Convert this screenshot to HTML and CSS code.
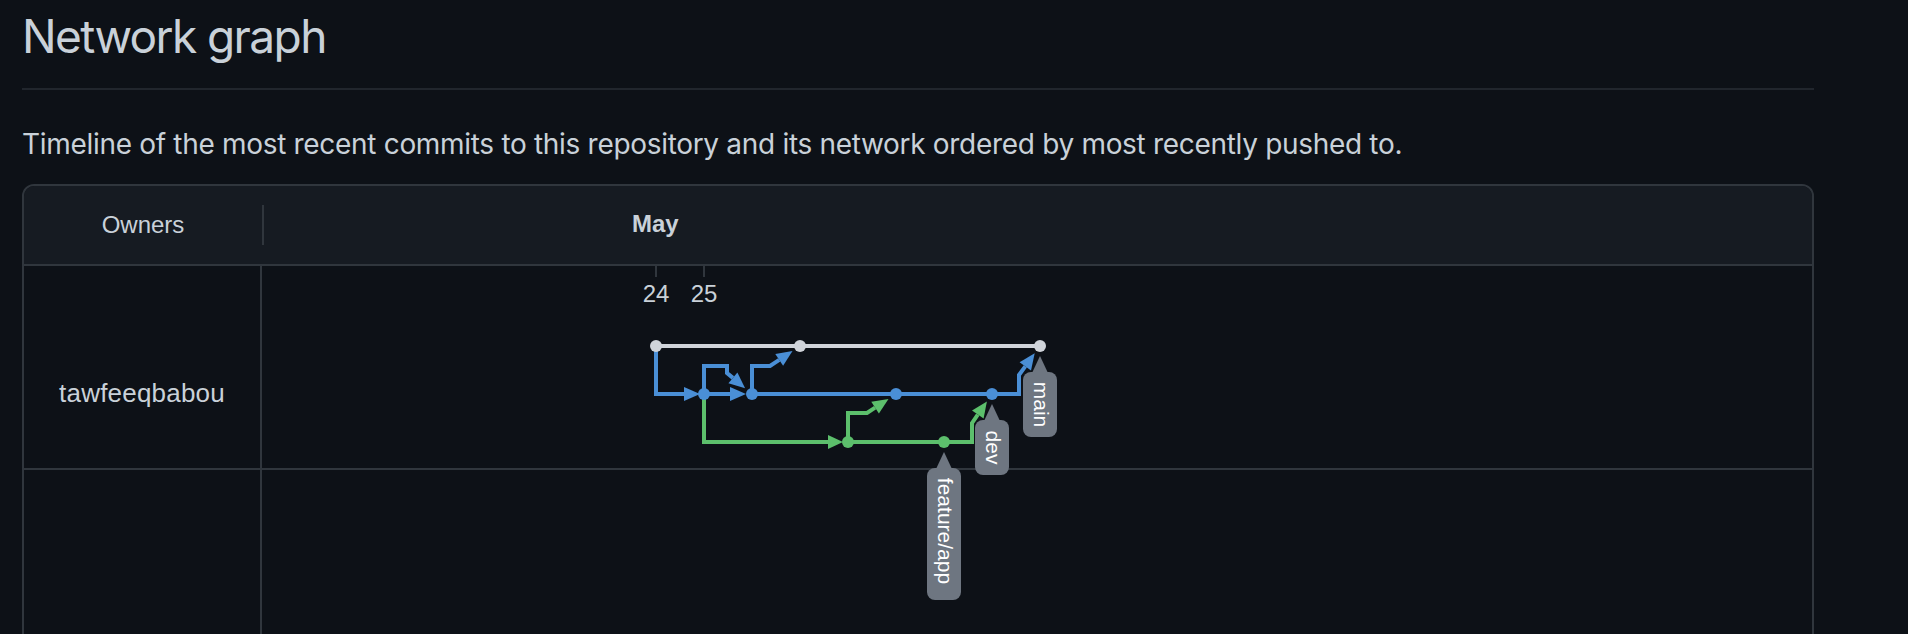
FILE: index.html
```html
<!DOCTYPE html>
<html lang="en">
<head>
<meta charset="utf-8">
<title>Network graph</title>
<link rel="stylesheet" href="styles.css">
</head>
<body>
<div class="page">
  <h2 class="subhead">Network graph</h2>
  <p class="lead">Timeline of the most recent commits to this repository and its network ordered by most recently pushed to.</p>
  <div class="network">
    <div class="net-head">
      <div class="owners-h">Owners</div>
      <div class="vsep"></div>
      <div class="months"><span class="month">May</span></div>
    </div>
    <div class="net-row first">
      <div class="owner">tawfeeqbabou</div>
      <div class="lane"></div>
    </div>
    <div class="net-row">
      <div class="owner"></div>
      <div class="lane"></div>
    </div>
    <svg class="graph" width="1788" height="600" viewBox="24 186 1788 600" xmlns="http://www.w3.org/2000/svg">
      <g class="ticks">
        <line x1="656" y1="266" x2="656" y2="277"/>
        <line x1="704" y1="266" x2="704" y2="277"/>
      </g>
      <text class="date" x="656" y="302">24</text>
      <text class="date" x="704" y="302">25</text>

      <g class="edges">
        <path class="w" d="M656 346 H1040"/>
        <path class="b" d="M656 346 V394 H685"/>
        <polygon class="bf" points="684,387 700,394 684,401"/>
        <path class="b" d="M704 394 H731"/>
        <polygon class="bf" points="730,387 746,394 730,401"/>
        <path class="b" d="M704 394 V366 H727 V373 L732.9 377.9"/>
        <polygon class="bf" points="728.4,383.3 745.1,388.2 737.4,372.5"/>
        <path class="b" d="M752 394 V366 H770 L779.2 359.9"/>
        <polygon class="bf" points="783.1,365.7 792.5,351 775.3,354.1"/>
        <path class="b" d="M752 394 H1019 V375 L1025.3 366.3"/>
        <polygon class="bf" points="1031,370.4 1034.7,353.3 1019.6,362.2"/>

        <path class="g" d="M704 394 V442 H829"/>
        <polygon class="gf" points="828,435 843,442 828,449"/>
        <path class="g" d="M848 442 V413 H867 L875.1 407.7"/>
        <polygon class="gf" points="878.9,413.6 888.5,398.9 871.3,401.8"/>
        <path class="g" d="M848 442 H972 V423 L977.8 414.6"/>
        <polygon class="gf" points="983.6,418.6 986.9,401.4 972,410.6"/>
      </g>

      <g class="dots">
        <circle class="wf" cx="656" cy="346" r="6"/>
        <circle class="wf" cx="800" cy="346" r="6"/>
        <circle class="wf" cx="1040" cy="346" r="6"/>
        <circle class="bf" cx="704" cy="394" r="6"/>
        <circle class="bf" cx="752" cy="394" r="6"/>
        <circle class="bf" cx="896" cy="394" r="6"/>
        <circle class="bf" cx="992" cy="394" r="6"/>
        <circle class="gf" cx="848" cy="442" r="6"/>
        <circle class="gf" cx="944" cy="442" r="6"/>
      </g>

      <g class="labels">
        <polygon class="tag" points="1032,373 1040,356 1048,373"/>
        <rect class="tag" x="1023" y="372" width="34" height="65" rx="8"/>
        <text class="tag-text" transform="translate(1040 372) rotate(90)" x="32.5" y="6">main</text>

        <polygon class="tag" points="984,421 992,404 1000,421"/>
        <rect class="tag" x="975" y="420" width="34" height="55" rx="8"/>
        <text class="tag-text" transform="translate(992 420) rotate(90)" x="27.5" y="6">dev</text>

        <polygon class="tag" points="936,469 944,452 952,469"/>
        <rect class="tag" x="927" y="468" width="34" height="132" rx="8"/>
        <text class="tag-text" transform="translate(944 468) rotate(90)" x="63" y="6">feature/app</text>
      </g>
    </svg>
  </div>
</div>
</body>
</html>
```

FILE: styles.css
```css
html, body {
  margin: 0;
  padding: 0;
  background: #0d1117;
}

body {
  overflow: hidden;
  color: #c9d1d9;
}

.page {
  width: 1792px;
  padding-left: 22px;
}

.subhead {
  margin: 0;
  padding-bottom: 16px;
  border-bottom: 2px solid #21262d;
  font-family: Inter, "Liberation Sans", sans-serif;
  font-weight: 400;
  font-size: 46px;
  letter-spacing: -1.6px;
  line-height: 72px;
  color: #c9d1d9;
}

.lead {
  margin: 33px 0 0;
  font-family: Inter, "Liberation Sans", sans-serif;
  font-size: 28px;
  letter-spacing: -0.31px;
  line-height: 42px;
  color: #c9d1d9;
}

.network {
  position: relative;
  margin-top: 19px;
  height: 600px;
  border: 2px solid #30363d;
  border-radius: 12px;
  overflow: hidden;
  font-family: "Liberation Sans", Arial, sans-serif;
}

.net-head {
  display: flex;
  align-items: center;
  height: 78px;
  background: #161b22;
  border-bottom: 2px solid #30363d;
}

.owners-h {
  width: 238px;
  text-align: center;
  font-size: 24px;
  line-height: 78px;
  color: #c9d1d9;
}

.vsep {
  width: 2px;
  height: 40px;
  background: #30363d;
}

.months {
  flex: 1;
  padding-left: 368px;
  line-height: 78px;
}

.month {
  font-weight: 700;
  font-size: 24px;
  color: #c9d1d9;
}

.net-row {
  display: flex;
  height: 202px;
  border-bottom: 2px solid #30363d;
}

.owner {
  width: 238px;
  border-right: 2px solid #30363d;
  padding-top: 113px;
  box-sizing: border-box;
  text-align: center;
  font-size: 26px;
  letter-spacing: 0.2px;
  line-height: 28px;
  color: #c9d1d9;
}

.lane {
  flex: 1;
}

.graph {
  position: absolute;
  left: 0;
  top: 0;
  pointer-events: none;
}

.ticks line {
  stroke: #30363d;
  stroke-width: 2;
}

.date {
  font-family: "Liberation Sans", Arial, sans-serif;
  font-size: 24px;
  fill: #c9d1d9;
  text-anchor: middle;
}

.edges path {
  fill: none;
  stroke-width: 4;
  stroke-linejoin: miter;
}

.w { stroke: #d0d4da; }
.b { stroke: #4a8fd6; }
.g { stroke: #5cbf6c; }
.wf { fill: #d0d4da; }
.bf { fill: #4a8fd6; }
.gf { fill: #5cbf6c; }

.tag {
  fill: #6e7681;
}

.tag-text {
  font-family: "Liberation Sans", Arial, sans-serif;
  font-size: 21px;
  fill: #ffffff;
  text-anchor: middle;
}
```
